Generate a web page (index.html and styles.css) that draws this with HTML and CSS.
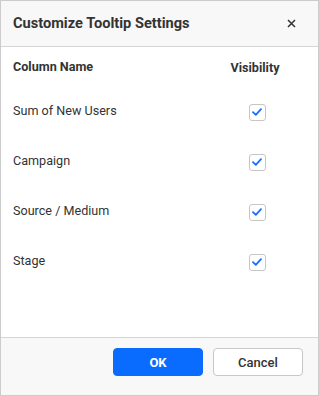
FILE: index.html
```html
<!DOCTYPE html>
<html lang="en">
    <head>
        <meta charset="UTF-8">
        <title>Customize Tooltip Settings</title>
        <link rel="stylesheet" href="styles.css">
    </head>
    <body>
        <div class="dialog">
            <div class="header">
                <div class="title">Customize Tooltip Settings</div>
                <button class="close" aria-label="Close">
                    <svg width="9" height="9" viewBox="0 0 9 9">
                        <path d="M1 1L8 8M8 1L1 8" stroke="#333" stroke-width="1.5" fill="none"/>
                    </svg>
                </button>
            </div>
            <div class="content">
                <div class="grid">
                    <div class="head">Column Name</div>
                    <div class="head center">Visibility</div>

                    <div class="cell">Sum of New Users</div>
                    <div class="cell center"><span class="check"></span></div>

                    <div class="cell">Campaign</div>
                    <div class="cell center"><span class="check"></span></div>

                    <div class="cell">Source / Medium</div>
                    <div class="cell center"><span class="check"></span></div>

                    <div class="cell">Stage</div>
                    <div class="cell center"><span class="check"></span></div>
                </div>
            </div>
            <div class="footer">
                <button class="btn primary">OK</button>
                <button class="btn">Cancel</button>
            </div>
        </div>
        <script>
            const tick = '<svg width="10" height="8" viewBox="0 0 10 8"><path d="M1 4.2L3.8 6.8L9 1.2" stroke="#1a6dff" stroke-width="1.8" fill="none" stroke-linecap="round" stroke-linejoin="round"/></svg>';
            document.querySelectorAll('.check').forEach((el) => {
                el.innerHTML = tick;
            });
        </script>
    </body>
</html>
```

FILE: styles.css
```css
body {
    margin: 0;
    font-family: Roboto, "Liberation Sans", sans-serif;
    color: #333;
}
.dialog {
    box-sizing: border-box;
    width: 319px;
    height: 396px;
    border: 1px solid #cccccc;
    display: flex;
    flex-direction: column;
    background: #fff;
}
.header {
    height: 45px;
    background: #f8f8f8;
    border-bottom: 1px solid #d6d6d6;
    display: flex;
    align-items: center;
    justify-content: space-between;
    padding: 0 22px 0 12px;
}
.title {
    font-size: 14.6px;
    font-weight: 700;
    padding-bottom: 1px;
}
.close {
    border: 0;
    background: none;
    padding: 0;
    width: 9px;
    height: 9px;
    display: flex;
}
.content {
    flex: 1;
    padding: 0 32px 0 12px;
}
.grid {
    display: grid;
    grid-template-columns: 1fr 62px;
    grid-template-rows: 40px repeat(4, 50px);
    align-items: center;
}
.head {
    font-size: 12.6px;
    font-weight: 700;
    padding-bottom: 2px;
}
.cell {
    font-size: 12.6px;
    padding-bottom: 3px;
}
.center {
    text-align: center;
    padding-bottom: 0;
}
.check {
    box-sizing: border-box;
    width: 17px;
    height: 17px;
    border: 1px solid #c6c6c6;
    border-radius: 3px;
    display: inline-flex;
    align-items: center;
    justify-content: center;
    vertical-align: middle;
    margin: 0 0 0 4px;
}
.footer {
    height: 47px;
    background: #f8f8f8;
    border-top: 1px solid #d6d6d6;
    display: flex;
    justify-content: flex-end;
    align-items: flex-start;
    gap: 10px;
    padding: 10px 15px 0 0;
}
.btn {
    width: 90px;
    height: 28px;
    border: 1px solid #c8c8c8;
    border-radius: 4px;
    background: #fff;
    font-family: Roboto, "Liberation Sans", sans-serif;
    font-size: 13px;
    font-weight: 500;
    color: #333;
}
.btn.primary {
    background: #0a6cff;
    border-color: #0a6cff;
    color: #fff;
    font-weight: 700;
}
```
